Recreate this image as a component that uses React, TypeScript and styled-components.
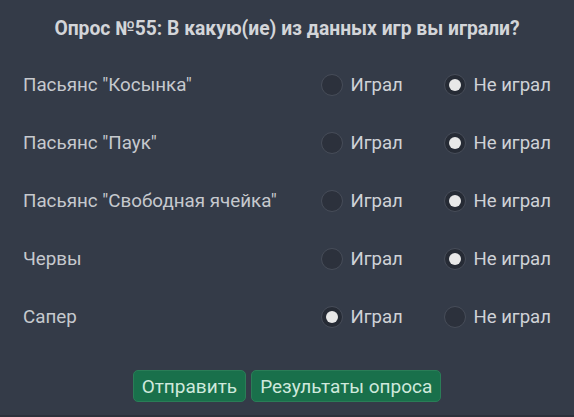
import React, { useState } from "react";
import styled, { createGlobalStyle } from "styled-components";

const Global = createGlobalStyle`
  html, body { margin: 0; padding: 0; background: #343b48; }
  body { font-family: Roboto, "Noto Sans", "Liberation Sans", sans-serif; }
`;

const Page = styled.div`
  width: 574px;
  height: 417px;
  box-sizing: border-box;
  background: #343b48;
  border-bottom: 2px solid #2c313c;
  display: flex;
  flex-direction: column;
`;

const Title = styled.h1`
  margin: 19px 0 17px;
  font-size: 19.3px;
  line-height: 20px;
  font-weight: 700;
  color: #d3d5d9;
  text-align: center;
`;

const List = styled.div`
  display: grid;
  grid-template-columns: 1fr 123px auto;
  grid-auto-rows: 58px;
  align-items: center;
  padding: 0 23px 0 23px;
`;

const Label = styled.div`
  font-size: 18.8px;
  color: #c6c9ce;
`;

const Option = styled.label`
  display: flex;
  align-items: center;
  gap: 7px;
  font-size: 18.6px;
  color: #cfd2d7;
  cursor: pointer;
`;

const Dot = styled.span<{ $on: boolean }>`
  width: 22px;
  height: 22px;
  box-sizing: border-box;
  border-radius: 50%;
  border: 1px solid #474d59;
  background: ${(p) => (p.$on ? "#262b35" : "#2c313c")};
  display: flex;
  align-items: center;
  justify-content: center;
  &::after {
    content: "";
    width: 12px;
    height: 12px;
    border-radius: 50%;
    background: #e8e8e8;
    display: ${(p) => (p.$on ? "block" : "none")};
  }
`;

const Actions = styled.div`
  display: flex;
  justify-content: center;
  gap: 5px;
  margin-top: 24px;
`;

const Button = styled.button`
  height: 32px;
  padding: 0 8px;
  border-radius: 5px;
  border: 1px solid #2a7d57;
  background: #19704b;
  color: #cfe9dc;
  font-family: Roboto, "Noto Sans", sans-serif;
  font-size: 19px;
  cursor: pointer;
`;

const games = [
  'Пасьянс "Косынка"',
  'Пасьянс "Паук"',
  'Пасьянс "Свободная ячейка"',
  "Червы",
  "Сапер",
];

export default function App() {
  const [answers, setAnswers] = useState<boolean[]>([false, false, false, false, true]);
  const set = (i: number, v: boolean) =>
    setAnswers((a) => a.map((x, j) => (j === i ? v : x)));
  return (
    <Page>
      <Global />
      <Title>Опрос №55: В какую(ие) из данных игр вы играли?</Title>
      <List>
        {games.map((g, i) => (
          <React.Fragment key={g}>
            <Label>{g}</Label>
            <Option onClick={() => set(i, true)}>
              <Dot $on={answers[i]} />
              Играл
            </Option>
            <Option onClick={() => set(i, false)}>
              <Dot $on={!answers[i]} />
              Не играл
            </Option>
          </React.Fragment>
        ))}
      </List>
      <Actions>
        <Button>Отправить</Button>
        <Button>Результаты опроса</Button>
      </Actions>
    </Page>
  );
}
